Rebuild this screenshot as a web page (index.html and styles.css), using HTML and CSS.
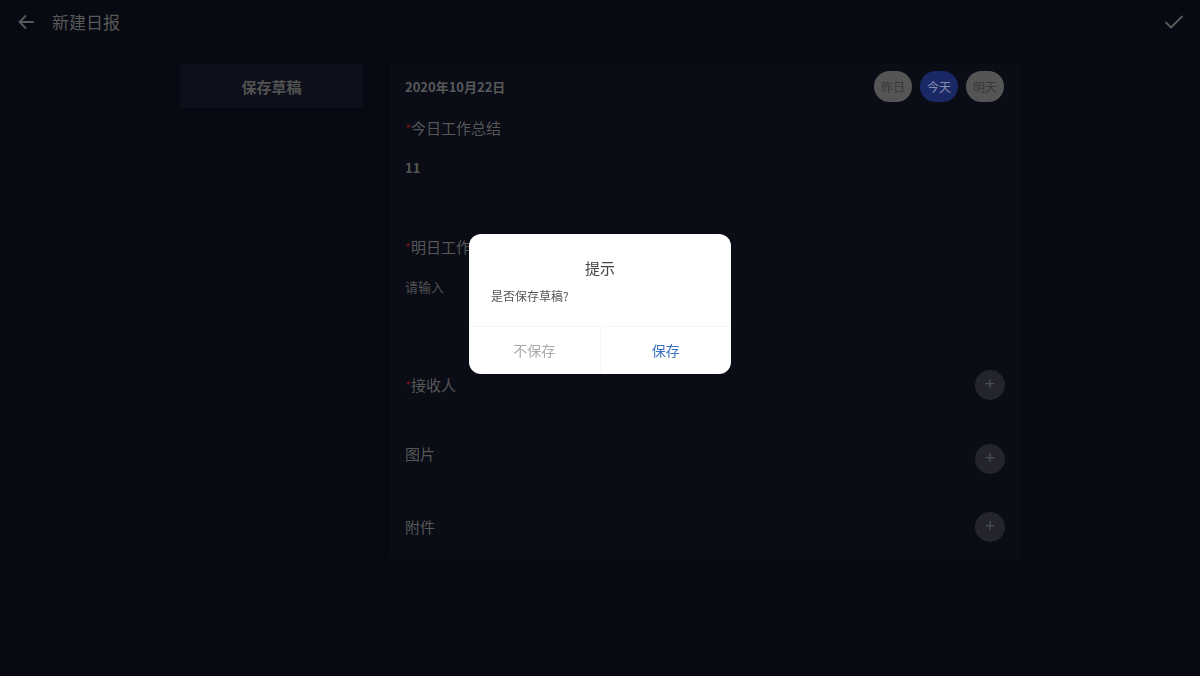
FILE: index.html
```html
<!DOCTYPE html>
<html lang="zh-CN">
<head>
<meta charset="utf-8">
<title>新建日报</title>
<link rel="stylesheet" href="styles.css">
</head>
<body>
<header class="topbar">
  <div class="topbar-left">
    <svg class="icon-back" width="18" height="18" viewBox="0 0 18 18"><path d="M16 9H2.5M8.5 3L2.5 9l6 6" fill="none" stroke="#5a5a5a" stroke-width="1.8" stroke-linecap="round" stroke-linejoin="round"/></svg>
    <span class="title">新建日报</span>
  </div>
  <svg class="icon-check" width="20" height="16" viewBox="0 0 20 16"><path d="M2 8.5l5 5L18 2.5" fill="none" stroke="#5a5a5a" stroke-width="1.8" stroke-linecap="round" stroke-linejoin="round"/></svg>
</header>

<main class="content">
  <aside class="sidebar">
    <div class="draft-btn">保存草稿</div>
  </aside>
  <section class="card">
    <div class="date-row">
      <span class="date">2020年10月22日</span>
      <div class="pills">
        <span class="pill">昨日</span>
        <span class="pill pill-active">今天</span>
        <span class="pill">明天</span>
      </div>
    </div>

    <div class="field">
      <div class="label"><span class="req">*</span>今日工作总结</div>
      <div class="area"><div class="value">11</div></div>
    </div>

    <div class="field">
      <div class="label"><span class="req">*</span>明日工作计划</div>
      <div class="area area-2"><div class="placeholder">请输入</div></div>
    </div>

    <div class="row row-recv">
      <div class="label"><span class="req">*</span>接收人</div>
      <span class="add">+</span>
    </div>
    <div class="row row-pic">
      <div class="label label-up">图片</div>
      <span class="add">+</span>
    </div>
    <div class="row row-file">
      <div class="label">附件</div>
      <span class="add">+</span>
    </div>
  </section>
</main>

<div class="dialog">
  <div class="dialog-title">提示</div>
  <div class="dialog-msg">是否保存草稿?</div>
  <div class="dialog-btns">
    <span class="dbtn dbtn-cancel">不保存</span>
    <span class="dbtn dbtn-ok">保存</span>
  </div>
</div>
</body>
</html>
```

FILE: styles.css
```css
* { box-sizing: border-box; }
html, body {
  margin: 0;
  padding: 0;
  height: 100%;
}
body {
  background: #070913;
  font-family: "Noto Sans CJK SC", "Noto Sans", "Liberation Sans", sans-serif;
  color: #5a5a5a;
  width: 1200px;
  height: 676px;
  overflow: hidden;
}

.topbar {
  height: 44px;
  display: flex;
  align-items: center;
  justify-content: space-between;
  padding: 0 16px 0 17px;
}
.topbar-left {
  display: flex;
  align-items: center;
}
.icon-back { display: block; }
.title {
  margin-left: 17px;
  font-size: 17px;
  color: #595959;
  line-height: 24px;
}
.icon-check { display: block; }

.content {
  width: 840px;
  margin: 20px auto 0;
  display: flex;
  align-items: flex-start;
  gap: 27px;
}
.sidebar { width: 183px; flex: none; }
.draft-btn {
  height: 44px;
  background: #0d101a;
  border-radius: 4px;
  display: flex;
  align-items: center;
  justify-content: center;
  font-size: 15px;
  font-weight: 700;
  color: #525252;
}

.card {
  width: 630px;
  flex: none;
  background: #0a0c16;
  padding: 7px 15px 17px;
}
.date-row {
  height: 31px;
  display: flex;
  align-items: center;
  justify-content: space-between;
}
.date {
  font-size: 13px;
  font-weight: 700;
  color: #595959;
}
.pills { display: flex; gap: 8px; margin-right: 1px; }
.pill {
  width: 38px;
  height: 31px;
  border-radius: 16px;
  background: #555;
  color: #383838;
  font-size: 12px;
  display: flex;
  align-items: center;
  justify-content: center;
}
.pill-active {
  background: #1a2866;
  color: #858cb0;
}

.field .label { margin-top: 15px; }
.label {
  font-size: 15px;
  line-height: 22px;
  color: #575757;
}
.req { color: #6b1214; font-size: 13px; }
.area {
  height: 96px;
  padding-top: 18px;
}
.area-2 { height: 102px; }
.value {
  font-size: 13px;
  font-weight: 700;
  line-height: 20px;
  color: #575757;
}
.placeholder {
  font-size: 13px;
  line-height: 20px;
  color: #525252;
}
.field + .field .label { margin-top: 0; }

.row {
  display: flex;
  align-items: center;
  justify-content: space-between;
  height: 30px;
}
.row-recv { margin-top: 9px; }
.row-pic { margin-top: 44px; }
.row-file { margin-top: 38px; }
.label-up { margin-bottom: 10px; }
.add {
  width: 30px;
  height: 30px;
  border-radius: 50%;
  background: #24252c;
  color: #4b4c52;
  font-size: 18px;
  line-height: 28px;
  text-align: center;
  font-family: "Liberation Sans", sans-serif;
}

.dialog {
  position: fixed;
  top: 234px;
  left: 469px;
  width: 262px;
  height: 140px;
  background: #fff;
  border-radius: 12px;
  overflow: hidden;
  display: flex;
  flex-direction: column;
}
.dialog-title {
  text-align: center;
  font-size: 15px;
  color: #444;
  padding-top: 23px;
  line-height: 22px;
}
.dialog-msg {
  font-size: 12px;
  color: #555;
  padding: 7px 22px 0;
  line-height: 20px;
}
.dialog-btns {
  margin-top: auto;
  height: 48px;
  display: flex;
  border-top: 1px solid #f6f6f6;
}
.dbtn {
  flex: 1;
  display: flex;
  align-items: center;
  justify-content: center;
  font-size: 14px;
  padding-bottom: 2px;
}
.dbtn-cancel { color: #aaa; border-right: 1px solid #f6f6f6; }
.dbtn-ok { color: #3b70c1; }
```
